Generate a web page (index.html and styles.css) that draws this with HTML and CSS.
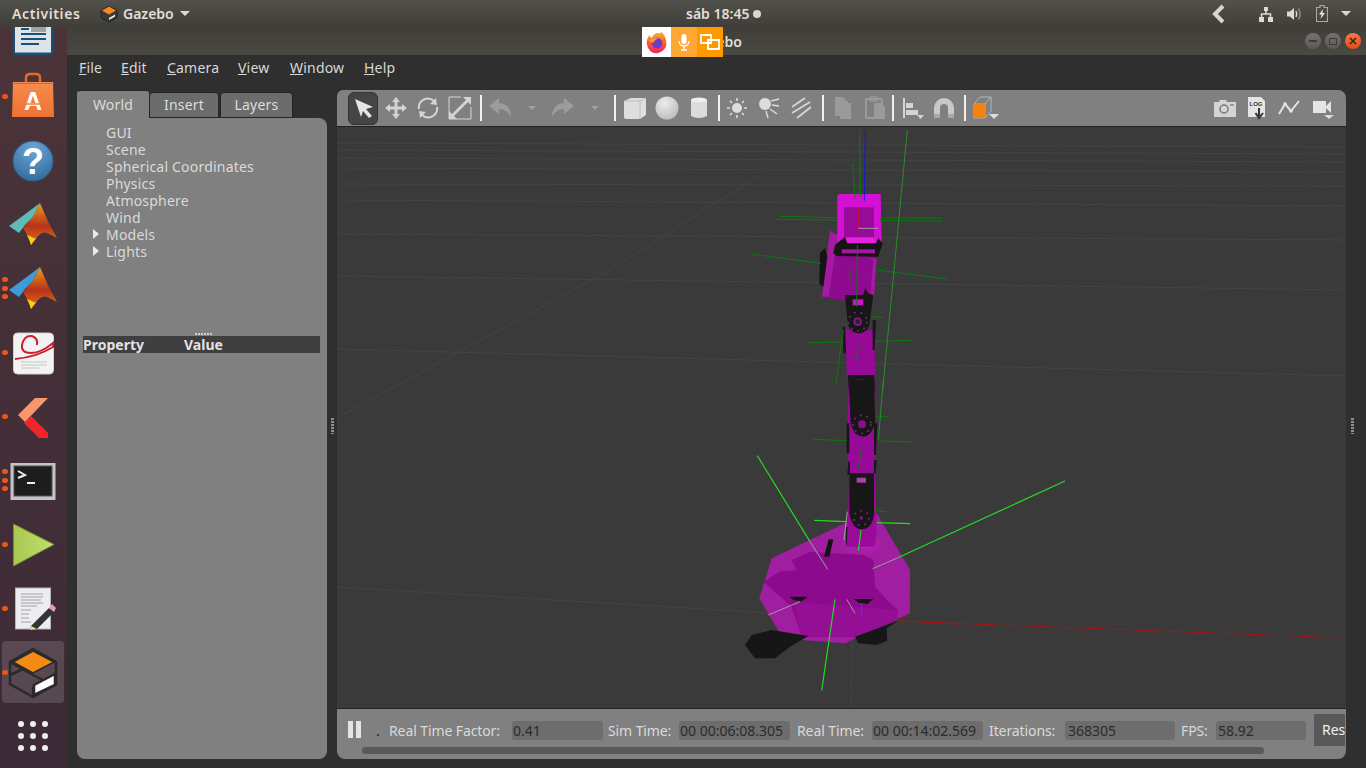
FILE: index.html
```html
<!DOCTYPE html>
<html lang="es">
<head>
<meta charset="utf-8">
<title>Gazebo</title>
<link rel="stylesheet" href="styles.css">
</head>
<body>
<header class="topbar">
  <span class="tb-activities">Activities</span>
  <span class="tb-app">
    <svg class="tb-appicon" viewBox="0 0 18 18" width="18" height="18"><path d="M9 1 17 5.500V12.500L9 17 1 12.500V5.500Z" fill="#3a3a3a" stroke="#222" stroke-width="1"/><path d="M9 1.500 16 5.500 9 9.500 2 5.500Z" fill="#f58a1f"/><path d="M9 13 15 9.500V11.500L9 15Z" fill="#eee"/></svg>
    Gazebo<i class="caret"></i>
  </span>
  <span class="tb-clock">sáb 18:45<i class="clock-dot"></i></span>
  <span class="tb-status">
    <svg viewBox="0 0 16 24" width="16" height="24"><path d="M13 4 5 12 13 20" fill="none" stroke="#d8d6d0" stroke-width="4"/></svg>
    <svg class="st-net" viewBox="0 0 16 16" width="16" height="16"><path d="M6 1h4v4H6zM1 11h5v5H1zM10 11h5v5h-5z" fill="#dcdad4"/><path d="M8 5v3M3.500 11V8h9v3" fill="none" stroke="#dcdad4" stroke-width="1.500"/></svg>
    <svg class="st-vol" viewBox="0 0 16 16" width="16" height="16"><path d="M1 5.500h3L8 2v12L4 10.500H1z" fill="#dcdad4"/><path d="M10 5q1.500 3 0 6" fill="none" stroke="#dcdad4" stroke-width="1.500"/><path d="M12.500 2.500q3 5.500 0 11" fill="none" stroke="#8f8d88" stroke-width="1.500"/></svg>
    <svg class="st-bat" viewBox="0 0 12 17" width="12" height="17"><path d="M4 .5h4v2h3.500v14H.5v-14H4z" fill="none" stroke="#a9a7a1" stroke-width="1.200"/><path d="M7 4 3 9.500h2.500L4.500 14 9 8H6.500z" fill="#e4e2dc"/></svg>
    <i class="caret st-caret"></i>
  </span>
</header>

<div class="desk">
  <nav class="dock">
    <div class="dock-list">
      <div class="dock-item">
        <svg viewBox="0 0 64 64" width="64" height="64"><g transform="translate(0 7)"><rect x="12" y="7" width="40" height="40" rx="3" fill="#14507a"/><rect x="14" y="9" width="36" height="35.500" fill="#dfe3e6"/><rect x="30" y="14" width="15" height="10" fill="#9aa3a8"/><path d="M20 17h8M20 21h8M20 26h25M20 31h25M20 36h18" stroke="#16527d" stroke-width="2"/></g></svg>
      </div>
      <div class="dock-item">
        <i class="pip pip-mid"></i>
        <svg viewBox="0 0 64 64" width="64" height="64"><defs><linearGradient id="bag" x1="0" y1="0" x2="0" y2="1"><stop offset="0" stop-color="#f68c50"/><stop offset="1" stop-color="#ee7230"/></linearGradient></defs><path d="M25 18v-5q0-4 4-4h6q4 0 4 4v5" fill="none" stroke="#e56a2a" stroke-width="2.500"/><path d="M12 17h40l1 35H11z" fill="url(#bag)"/><path d="M11 18h42v1H11z" fill="#d4622a"/><text x="32" y="45" class="dock-a">A</text><path d="M25 39h14" stroke="#f07a38" stroke-width="1.500"/></svg>
      </div>
      <div class="dock-item">
        <svg viewBox="0 0 64 64" width="64" height="64"><defs><radialGradient id="help" cx=".5" cy=".2" r=".9"><stop offset="0" stop-color="#6ea6d4"/><stop offset="1" stop-color="#2b6699"/></radialGradient></defs><circle cx="32" cy="32" r="20" fill="url(#help)" stroke="#2a5f8e"/><text x="32" y="45" class="dock-q">?</text></svg>
      </div>
      <div class="dock-item">
        <svg viewBox="0 0 64 64" width="64" height="64"><defs><linearGradient id="mat" x1="0" y1="0" x2="0" y2="1"><stop offset="0" stop-color="#f29a1c"/><stop offset=".55" stop-color="#b5331a"/><stop offset="1" stop-color="#e8751a"/></linearGradient></defs><path d="M8 33 23 22 39 10 32 24 24 32 18 40Z" fill="#5fbcb4"/><path d="M39 10Q46 28 56 45L46 40Q42 38 37 43 32 50 30 52 28 44 22 35 32 26 39 10Z" fill="url(#mat)"/><path d="M26 42Q29 48 30 52 33 47 35 46Z" fill="#f2d21c"/></svg>
      </div>
      <div class="dock-item">
        <i class="pip pip-a"></i><i class="pip pip-b"></i><i class="pip pip-c"></i>
        <svg viewBox="0 0 64 64" width="64" height="64"><path d="M8 33 23 22 39 10 32 24 24 32 18 40Z" fill="#3f9bd8"/><path d="M39 10Q46 28 56 45L46 40Q42 38 37 43 32 50 30 52 28 44 22 35 32 26 39 10Z" fill="url(#mat)"/><path d="M26 42Q29 48 30 52 33 47 35 46Z" fill="#f2d21c"/></svg>
      </div>
      <div class="dock-item">
        <i class="pip pip-mid"></i>
        <svg viewBox="0 0 64 64" width="64" height="64"><rect x="12.500" y="12" width="40" height="41" rx="4" fill="#f3f3f3" stroke="#cfcfcf"/><path d="M14 38Q36 36 52 26V22Q40 32 30 32 20 32 21 24 23 14 31 15 37 17 36 24" fill="none" stroke="#cc2030" stroke-width="2"/><path d="M20 41h26M20 44h26M20 47h18" stroke="#c4c4c4"/></svg>
      </div>
      <div class="dock-item">
        <i class="pip pip-mid"></i>
        <svg viewBox="0 0 64 64" width="64" height="64"><path d="M47 13H34L17 30 24 37Z" fill="#f9976c"/><path d="M23 38 30 31 47 48V53H38Z" fill="#f3242b"/></svg>
      </div>
      <div class="dock-item">
        <i class="pip pip-a"></i><i class="pip pip-b"></i><i class="pip pip-c"></i>
        <svg viewBox="0 0 64 64" width="64" height="64"><rect x="9.500" y="14" width="45" height="37" fill="#c4c4c4"/><rect x="13" y="17" width="38" height="30" fill="#1d1d1d" stroke="#555"/><path d="M17 22 24 26 17 29" fill="none" stroke="#eee" stroke-width="2"/><path d="M26 34h8" stroke="#eee" stroke-width="2"/></svg>
      </div>
      <div class="dock-item">
        <i class="pip pip-mid"></i>
        <svg viewBox="0 0 64 64" width="64" height="64"><defs><linearGradient id="play" x1="0" y1="0" x2="1" y2="0"><stop offset="0" stop-color="#a8c94e"/><stop offset="1" stop-color="#c4dd72"/></linearGradient></defs><path d="M12.500 11 53 31.500 12.500 53Z" fill="url(#play)" stroke="#6f962a"/></svg>
      </div>
      <div class="dock-item">
        <i class="pip pip-mid"></i>
        <svg viewBox="0 0 64 64" width="64" height="64"><rect x="14.500" y="11" width="35" height="41" fill="#ecedf0" stroke="#b4b4b8"/><path d="M20 17h22M20 20h22M20 23h20M20 26h22M20 29h16M20 33h10M20 37h8M20 41h8M20 45h10" stroke="#a2a2a6"/><path d="M30 49 48 31 53 35 36 52 29 53Z" fill="#333"/><path d="M48 31 51 27 55 31 53 35Z" fill="#e69ac0"/><path d="M30 49 36 52 29 53Z" fill="#f0e080"/></svg>
      </div>
      <div class="dock-item dock-active">
        <i class="pip pip-mid"></i>
        <svg viewBox="0 0 64 64" width="64" height="64"><path d="M32 8 55 21V43L32 56 9 43V21Z" fill="none" stroke="#2a2a2a" stroke-width="2.500"/><path d="M32 10 53 21 32 32 12 21Z" fill="#f58a14" stroke="#2a2a2a" stroke-width="1.500"/><path d="M9 21 32 34 42 39M9 34 22 28M32 56V47L42 39" fill="none" stroke="#2a2a2a" stroke-width="2.500"/><path d="M33 44 54 33V44L33 54Z" fill="#fff" stroke="#2a2a2a" stroke-width="2.500"/></svg>
      </div>
      <div class="dock-item">
        <svg viewBox="0 0 64 64" width="64" height="64" fill="#efefef"><circle cx="20" cy="19" r="3"/><circle cx="32" cy="19" r="3"/><circle cx="44" cy="19" r="3"/><circle cx="20" cy="31" r="3"/><circle cx="32" cy="31" r="3"/><circle cx="44" cy="31" r="3"/><circle cx="20" cy="43" r="3"/><circle cx="32" cy="43" r="3"/><circle cx="44" cy="43" r="3"/></svg>
      </div>
    </div>
  </nav>

  <div class="window">
    <div class="titlebar">
      <span class="win-title">Gazebo</span>
      <span class="win-btns">
        <i class="win-btn"><b class="ico-min"></b></i>
        <i class="win-btn"><b class="ico-max"></b></i>
        <i class="win-btn win-close"><svg viewBox="0 0 10 10" width="10" height="10"><path d="M2 2 8 8M8 2 2 8" stroke="#3a2015" stroke-width="1.500"/></svg></i>
      </span>
      <div class="sharebar">
        <span class="share-fx">
          <svg viewBox="0 0 24 24" width="23" height="23"><defs><linearGradient id="fx" x1="0" y1="0" x2="0" y2="1"><stop offset="0" stop-color="#ffb322"/><stop offset=".5" stop-color="#ff5a36"/><stop offset="1" stop-color="#e7255f"/></linearGradient></defs><path d="M12 2Q16 3 17 1 21 4 22 10 24 20 14 23 4 24 2 14 1 9 5 4 5 7 7 7 9 3 12 2Z" fill="url(#fx)"/><circle cx="12.500" cy="12.500" r="5.500" fill="#6a3cc8"/><path d="M4 10Q9 6 14 8 10 9 9 12 6 13 4 10Z" fill="#ff9a20"/></svg>
        </span>
        <span class="share-mic">
          <svg viewBox="0 0 16 20" width="16" height="20"><rect x="5.500" y="2" width="5" height="10" rx="2.500" fill="#fff"/><path d="M3 9q0 5 5 5t5-5M8 14v4M5 18h6" fill="none" stroke="#fff" stroke-width="1.300"/></svg>
        </span>
        <span class="share-win">
          <svg viewBox="0 0 20 16" width="20" height="16"><path d="M1 1h10v8H1zM8 6h11v9H8z" fill="#ff9900" stroke="#fff" stroke-width="1.800"/></svg>
        </span>
      </div>
    </div>

    <div class="menubar">
      <span class="menu m-file"><u>F</u>ile</span>
      <span class="menu m-edit"><u>E</u>dit</span>
      <span class="menu m-cam"><u>C</u>amera</span>
      <span class="menu m-view"><u>V</u>iew</span>
      <span class="menu m-win"><u>W</u>indow</span>
      <span class="menu"><u>H</u>elp</span>
    </div>

    <div class="main">
      <aside class="leftcol">
        <div class="tabs">
          <span class="tab tab-on">World</span>
          <span class="tab tab-ins">Insert</span>
          <span class="tab tab-lay">Layers</span>
        </div>
        <div class="panel">
          <ul class="tree">
            <li>GUI</li>
            <li>Scene</li>
            <li>Spherical Coordinates</li>
            <li>Physics</li>
            <li>Atmosphere</li>
            <li>Wind</li>
            <li class="has-kids">Models</li>
            <li class="has-kids">Lights</li>
          </ul>
          <div class="vgrip"></div>
          <div class="prop-head"><span class="prop-a">Property</span><span>Value</span></div>
        </div>
      </aside>

      <div class="split"><i class="grip"></i></div>

      <section class="view">
        <div class="toolbar">
          <span class="tool tool-on"><svg viewBox="0 0 24 24" width="24" height="24"><path d="M4 3 22 11 15 13 21 20 18 22 12 15 10 21Z" fill="#e4e4e4"/></svg></span>
          <span class="tool"><svg viewBox="0 0 24 24" width="24" height="24"><path d="M12 1 16 6H13.500V10.500H18V8L23 12 18 16V13.500H13.500V18H16L12 23 8 18H10.500V13.500H6V16L1 12 6 8V10.500H10.500V6H8Z" fill="#d4d4d4"/></svg></span>
          <span class="tool"><svg viewBox="0 0 24 24" width="24" height="24"><path d="M3 13A9 9 0 0 1 18 5M21 11A9 9 0 0 1 6 19" fill="none" stroke="#d4d4d4" stroke-width="2"/><path d="M14 8 21 9 20 2ZM10 16 3 15 4 22Z" fill="#d4d4d4"/></svg></span>
          <span class="tool"><svg viewBox="0 0 24 24" width="24" height="24"><path d="M13 1H1V23H23V11" fill="none" stroke="#d4d4d4" stroke-width="1"/><path d="M15 1H23V9L20 6 6 20 9 23H1V15L4 18 18 4Z" fill="#d4d4d4"/></svg></span>
          <i class="sep"></i>
          <span class="tool"><svg viewBox="0 0 24 24" width="24" height="24"><path d="M1 10 11 2V7Q23 8 23 21 19 13 11 13V18Z" fill="#9c9c9c"/></svg></span>
          <span class="tool tool-drop"><i class="drop drop-dim"></i></span>
          <span class="tool"><svg viewBox="0 0 24 24" width="24" height="24"><path d="M23 10 13 2V7Q1 8 1 21 5 13 13 13V18Z" fill="#9c9c9c"/></svg></span>
          <span class="tool tool-drop"><i class="drop drop-dim"></i></span>
          <i class="sep sep-a"></i>
          <span class="tool"><svg viewBox="0 0 24 24" width="24" height="24"><path d="M1 5 8 2 23 2V19L17 23H3Q1 23 1 21Z" fill="#dedede"/><path d="M1 5 17 5 23 2M17 5V23" fill="none" stroke="#bdbdbd"/></svg></span>
          <span class="tool"><svg viewBox="0 0 24 24" width="24" height="24"><defs><radialGradient id="ball" cx=".4" cy=".3" r=".8"><stop offset="0" stop-color="#ececec"/><stop offset="1" stop-color="#b8b8b8"/></radialGradient></defs><circle cx="12" cy="12" r="11.500" fill="url(#ball)"/></svg></span>
          <span class="tool"><svg viewBox="0 0 24 24" width="24" height="24"><path d="M4 4Q12 0 20 4V20Q12 24 4 20Z" fill="#dcdcdc"/><ellipse cx="12" cy="4" rx="8" ry="2.500" fill="#eee"/></svg></span>
          <i class="sep sep-b"></i>
          <span class="tool"><svg viewBox="0 0 24 24" width="24" height="24"><circle cx="12" cy="12" r="5" fill="#dcdcdc"/><path d="M12 2V5M12 19V22M2 12H5M19 12H22M5 5 7 7M19 5 17 7M5 19 7 17M19 19 17 17" stroke="#dcdcdc" stroke-width="1.600"/></svg></span>
          <span class="tool"><svg viewBox="0 0 24 24" width="24" height="24"><circle cx="8" cy="8" r="6" fill="#dcdcdc"/><path d="M14 5 22 3M15 9 22 10M13 13 20 18M9 15 11 22" stroke="#dcdcdc" stroke-width="1.400"/></svg></span>
          <span class="tool"><svg viewBox="0 0 24 24" width="24" height="24"><path d="M3 11 16 2M3 17 21 6M8 22 22 11" stroke="#d4d4d4" stroke-width="2"/></svg></span>
          <i class="sep sep-c"></i>
          <span class="tool"><svg viewBox="0 0 24 24" width="24" height="24"><path d="M4 1H12L17 6V20H4ZM14 7 20 7V23H9V21" fill="#9a9a9a"/></svg></span>
          <span class="tool"><svg viewBox="0 0 24 24" width="24" height="24"><path d="M3 3H19V22H3Z" fill="none" stroke="#a2a2a2" stroke-width="1.500"/><rect x="7" y="1" width="8" height="4" rx="1" fill="none" stroke="#a2a2a2"/><path d="M11 7H18L22 11V23H11Z" fill="#9a9a9a"/></svg></span>
          <i class="sep sep-d"></i>
          <span class="tool"><svg viewBox="0 0 24 24" width="24" height="24"><path d="M4 2V22" stroke="#d4d4d4" stroke-width="2"/><path d="M6 7H13V12H6ZM6 14H18V19H6Z" fill="#d4d4d4"/><path d="M17 19H24L20.500 23Z" fill="#d4d4d4"/></svg></span>
          <span class="tool"><svg viewBox="0 0 24 24" width="24" height="24"><path d="M2 22V12A10 10 0 0 1 22 12V22H16V12A4 4 0 0 0 8 12V22Z" fill="#c8c8c8"/><path d="M2 22H8V18H2ZM16 22H22V18H16Z" fill="#a8a8a8"/></svg></span>
          <i class="sep sep-e"></i>
          <span class="tool tool-view"><svg viewBox="0 0 26 24" width="26" height="24"><path d="M1 8H12V22H1ZM1 8 7 1H18L12 8M18 1V15L12 22" fill="none" stroke="#b4b4b4"/><rect x="1" y="8" width="11" height="14" fill="#f5820f"/><path d="M16 18H26L21 23Z" fill="#dcdcdc"/></svg></span>
          <span class="tool-space"></span>
          <span class="tool"><svg viewBox="0 0 24 24" width="24" height="24"><path d="M1 6H6L7 4H13L14 6H23V21H1Z" fill="#d4d4d4"/><circle cx="11" cy="13" r="4" fill="none" stroke="#777" stroke-width="1.500"/><rect x="17" y="8" width="4" height="2" fill="#999"/></svg></span>
          <span class="tool"><svg viewBox="0 0 24 24" width="24" height="24"><path d="M3 1H16L20 5V21H3Z" fill="#e4e4e4"/><text x="11" y="10" class="log-txt">LOG</text><path d="M14 12V20M10.500 17 14 22 18 17" fill="none" stroke="#333" stroke-width="2"/></svg></span>
          <span class="tool"><svg viewBox="0 0 24 24" width="24" height="24"><path d="M2 18 8 8 14 15 22 5" fill="none" stroke="#e4e4e4" stroke-width="2"/><circle cx="8" cy="8" r="1.800" fill="#e4e4e4"/><circle cx="14" cy="15" r="1.800" fill="#e4e4e4"/></svg></span>
          <span class="tool tool-last"><svg viewBox="0 0 24 24" width="24" height="24"><path d="M2 5H15V17H2ZM15 10 20 5V17L15 12Z" fill="#e4e4e4"/><path d="M13 19H23L18 23Z" fill="#dcdcdc"/></svg></span>
        </div>

        <div class="scene">
          <svg class="scene-svg" viewBox="337 127 1009 581" width="1009" height="581">
            <g class="grid">
              <path d="M337 143 1346 147M337 150 1346 154M337 158 1346 162M337 168 1346 172M337 184 1346 186M337 200 1346 206M337 234 1346 240M337 276 1346 290M337 349 1346 376M337 587 920 622"/>
              <path d="M337 418 610 270 760 175M860 127 851 708"/>
            </g>
            <path class="axis-red" d="M920 622 1346 638"/>

            <g transform="translate(730 130) scale(.33333)">
              <path d="M300 302 440 385 432 500 345 512 276 500Z" fill="#8e0a8e"/>
              <path d="M300 302 340 325 420 385 440 385 432 500 420 500 430 390 320 340 296 500 276 500Z" fill="#a31ba3"/>
              <path d="M322 195 330 192H452L455 340 440 345H330L322 330Z" fill="#d410d4"/>
              <rect x="342" y="232" width="90" height="98" fill="#980a98"/>
              <path d="M345 322H430L440 345 345 345Z" fill="#e820e0"/>
              <path d="M315 345 345 320 352 340H438L445 325 458 340 445 380 320 378 310 370Z" fill="#141414"/>
              <rect x="335" y="358" width="100" height="12" fill="#a418a4"/>
              <path d="M270 370 285 355 292 380 280 470 268 462Z" fill="#141414"/>
              <path d="M347 600H432L436 735H350Z" fill="#960a96"/>
              <path d="M345 495 400 495 405 475 415 490 430 495 418 585Q410 612 382 610 355 605 352 570Z" fill="#171717"/>
              <rect x="368" y="508" width="32" height="18" fill="#d010c8"/>
              <circle cx="383" cy="575" r="13" fill="#8e108e"/>
              <circle cx="383" cy="575" r="7" fill="#242424"/>
              <circle class="holes" cx="383" cy="575" r="28"/>
              <path d="M338 590 345 590 348 670 340 670ZM428 570 438 570 434 660 428 660Z" fill="#171717"/>
              <path d="M354 735H432L436 780H354Z" fill="#171717"/>
              <rect x="376" y="749" width="30" height="14" fill="#a318a3"/>
              <g class="g-dark">
                <path d="M388 14 392 200M368 100 375 205M148 259 322 263M136 268 322 270M636 264 450 264M638 273 448 272M70 373 272 400M440 420 650 447M382 345 380 530M360 420V455M425 560 460 562M236 638 340 636M435 634 546 631M340 600 318 758M386 650 376 695"/>
              </g>
              <path class="g-mid" d="M532 0 458 780"/>
              <path class="a-blue" d="M406 0 403 212"/>
              <path class="a-red" d="M385 234V298"/>
              <path class="a-grey" d="M385 295H445"/>
            </g>

            <g transform="translate(730 380) scale(.33333)">
              <path d="M125 535 345 430 440 400 540 570 540 700 345 790 215 780 150 760 88 655Z" fill="#a01ea0"/>
              <path d="M185 540 240 515 400 525 430 540 435 620 480 670 503 690 500 720 380 770 215 770 185 680 100 605 150 575 200 570Z" fill="#8c0a8c"/>
              <path d="M190 665 500 690 500 720 380 770 215 770Z" fill="#930f93"/>
              <path d="M45 795 65 765 125 750 235 768 180 800 135 835 75 835Z" fill="#161616"/>
              <path d="M375 770 505 722 470 745 472 782 440 795 385 790Z" fill="#161616"/>
              <path d="M178 650H234L215 664 190 660ZM372 657H430L412 672 385 668Z" fill="#141414"/>
              <path d="M296 478H310L298 530H282Z" fill="#141414"/>
              <ellipse cx="395" cy="492" rx="58" ry="30" fill="#a520a5"/>
              <path d="M390 480Q420 460 435 475V505H392Z" fill="#d80cd0"/>
              <path d="M348 440H362V495H348ZM365 480H382V495H365Z" fill="#171717"/>
              <path d="M356 0H432L440 170 436 280H356L352 170Z" fill="#970a97"/>
              <path d="M356 0H432L436 125Q425 170 398 170 370 168 362 130Z" fill="#171717"/>
              <path d="M350 130 358 130 358 220 350 220ZM355 245H360V285H352ZM432 130 442 130 438 225 432 225ZM432 240H440L436 285H432Z" fill="#171717"/>
              <circle cx="396" cy="133" r="12" fill="#8a108a"/>
              <circle class="holes" cx="396" cy="133" r="27"/>
              <path d="M358 280H435L440 450 434 500H350Z" fill="#980a98"/>
              <path d="M358 280H432L432 405Q425 448 394 448 366 445 358 400Z" fill="#171717"/>
              <rect x="380" y="293" width="28" height="15" fill="#a840a8"/>
              <circle cx="394" cy="414" r="5" fill="#8a108a"/>
              <circle class="holes" cx="394" cy="414" r="22"/>
              <path class="g-dark" d="M250 178 350 182M445 183 548 186M438 108 474 111M395 200 385 265M432 390 470 396"/>
              <path class="g-mid" d="M460 0 445 180"/>
              <path class="g-bright" d="M82 227 240 485M1005 303 500 535M315 658 275 932M253 421 350 425M440 428 540 431M393 450 385 512"/>
              <path class="a-grey" d="M240 485 293 568M500 535 428 566M350 658 375 700M115 705 210 665M352 395 342 480"/>
              <path class="a-purple" d="M395 670V710"/>
              <path class="a-redb" d="M505 722 690 732"/>
            </g>
          </svg>
        </div>

        <div class="status">
          <span class="pause"><i></i><i></i></span>
          <span class="st-dot">.</span>
          <span class="lbl l-rtf">Real Time Factor:</span><span class="fld f-rtf">0.41</span>
          <span class="lbl l-sim">Sim Time:</span><span class="fld f-time">00 00:06:08.305</span>
          <span class="lbl l-real">Real Time:</span><span class="fld f-time">00 00:14:02.569</span>
          <span class="lbl l-iter">Iterations:</span><span class="fld f-iter">368305</span>
          <span class="lbl l-fps">FPS:</span><span class="fld f-fps">58.92</span>
          <span class="reset">Res</span>
          <i class="hscroll"></i>
        </div>
      </section>

      <div class="rhandle"><i class="grip"></i></div>
    </div>
  </div>
</div>
</body>
</html>
```
FILE: styles.css
```css
* { box-sizing: border-box; }
html, body { margin: 0; padding: 0; }
body {
  width: 1366px; height: 768px; overflow: hidden;
  display: flex; flex-direction: column;
  font-family: "Noto Sans", "Open Sans", sans-serif;
  font-size: 14px; background: #2f2f2f;
}
i, b { display: block; font-style: normal; }

/* top bar */
.topbar {
  height: 27px; flex: none; position: relative; z-index: 3;
  display: flex; align-items: center;
  background: linear-gradient(#53514b, #3f3e39);
  color: #e2dfd8; font-weight: 600; font-size: 14px;
}
.tb-activities { margin-left: 12px; width: 88px; letter-spacing: .6px; }
.tb-app { display: flex; align-items: center; }
.tb-appicon { margin-right: 5px; }
.caret { width: 0; height: 0; border: 5px solid transparent; border-top: 5px solid #dcdad4; border-bottom: 0; margin-left: 6px; }
.tb-clock { position: absolute; left: 686px; display: flex; align-items: center; }
.clock-dot { width: 8px; height: 8px; border-radius: 50%; background: #d8d6d0; margin-left: 4px; }
.tb-status { margin-left: auto; display: flex; align-items: center; }
.tb-status > svg:first-child { margin-right: 32px; }
.st-net { margin-right: 12px; }
.st-vol { margin-right: 14px; }
.st-bat { margin-right: 13px; }
.st-caret { margin: 0 15px 0 0; }

/* desk */
.desk { flex: 1; display: flex; min-height: 0; }

/* dock */
.dock {
  width: 67px; flex: none; overflow: hidden;
  background: linear-gradient(#4b3439, #3c2a36);
}
.dock-list { margin-top: -26px; display: flex; flex-direction: column; }
.dock-item { height: 64px; flex: none; position: relative; padding-left: 1px; }
.dock-item svg { display: block; }
.dock-active::before {
  content: ""; position: absolute; left: 2px; top: 0; width: 62px; height: 62px;
  background: rgba(255,255,255,.14); border-radius: 4px;
}
.dock-active svg { position: relative; }
.pip { position: absolute; left: 2px; width: 5.500px; height: 5.500px; border-radius: 50%; background: #e9541f; }
.pip-mid { top: 28.500px; }
.pip-a { top: 19.500px; }
.pip-b { top: 28.500px; }
.pip-c { top: 36.500px; }
.dock-a { font-size: 25px; font-weight: 700; fill: #fff; text-anchor: middle; font-family: "Liberation Sans", sans-serif; }
.dock-q { font-size: 36px; font-weight: 700; fill: #fff; text-anchor: middle; font-family: "Liberation Sans", sans-serif; }

/* window */
.window { flex: 1; display: flex; flex-direction: column; min-width: 0; position: relative; }
.titlebar {
  height: 28px; flex: none; position: relative;
  display: flex; align-items: center; justify-content: center;
  background: linear-gradient(#3f3e39, #4a4943);
}
.win-title { color: #e2dfd8; font-weight: 600; margin-top: 0; }
.win-btns { position: absolute; right: 5px; top: 6px; display: flex; gap: 4px; }
.win-btn {
  width: 16px; height: 16px; border-radius: 50%;
  background: linear-gradient(#75736e, #5a5955);
  display: flex; align-items: center; justify-content: center;
}
.ico-min { width: 8px; height: 1.500px; background: #3d3c38; }
.ico-max { width: 8px; height: 7px; border: 1.500px solid #3d3c38; }
.win-close { background: linear-gradient(#f47a45, #df4d18); }
.sharebar { position: absolute; left: 575px; top: 0; height: 30px; display: flex; }
.sharebar span { display: flex; align-items: center; justify-content: center; }
.share-fx { width: 29px; background: #fff; }
.share-mic { width: 26px; background: #ffa733; }
.share-win { width: 26px; background: #ff9900; }

.menubar {
  height: 27px; flex: none; display: flex; align-items: center;
  padding: 0 0 2px 12px; background: #2f2f2f; color: #d8d8d8;
  letter-spacing: .2px; font-size: 14px;
}
.menu { flex: none; }
.m-file { width: 42px; }
.m-edit { width: 46px; }
.m-cam { width: 71px; }
.m-view { width: 52px; }
.m-win { width: 74px; }

/* main */
.main { flex: 1; display: flex; min-height: 0; padding: 8px 0 9px 10px; }
.leftcol { width: 250px; flex: none; display: flex; flex-direction: column; }
.tabs { height: 28px; flex: none; display: flex; align-items: flex-end; gap: 1px; color: #dcdcdc; letter-spacing: .2px; }
.tab {
  height: 26px; background: #6c6c6c; border: 1px solid #232323;
  border-radius: 4px 4px 0 0; display: flex; align-items: center; justify-content: center;
  padding-bottom: 1px;
}
.tab-on { width: 72px; height: 29px; margin-bottom: -1px; background: #808080; border-color: #808080; position: relative; z-index: 1; border-top-color: #2a2a2a; padding-bottom: 0; }
.tab-ins { width: 70px; margin-left: -1px; }
.tab-lay { width: 73px; }
.panel { flex: 1; background: #808080; border-radius: 0 8px 8px 8px; position: relative; padding-top: 6px; color: #dadada; min-height: 0; }
.tree { list-style: none; margin: 0; padding: 0 0 0 29px; line-height: 17px; height: 202px; letter-spacing: .2px; }
.tree li { position: relative; height: 17px; white-space: nowrap; }
.has-kids::before {
  content: ""; position: absolute; left: -13px; top: 3px; width: 0; height: 0;
  border: 5px solid transparent; border-left: 6px solid #eaeaea; border-right: 0;
}
.vgrip { height: 2px; width: 17px; margin: 7px 0 0 118px; background: repeating-linear-gradient(90deg, #cfcfcf 0 2px, transparent 2px 3px); }
.prop-head {
  margin: 1px 7px 0 6px; height: 17px; background: #3f3f3f; color: #e2e2e2; font-weight: 700;
  display: flex; align-items: center; line-height: 17px;
}
.prop-a { width: 101px; }

.split { width: 10px; flex: none; display: flex; align-items: center; justify-content: center; padding-top: 2px; }
.grip { width: 3px; height: 16px; background: repeating-linear-gradient(#909090 0 2px, transparent 2px 3px); }

.view { width: 1009px; flex: none; display: flex; flex-direction: column; }
.toolbar {
  height: 37px; flex: none; display: flex; align-items: center; padding: 0 5px 0 11px;
  background: #808080; border-radius: 6px 8px 0 0; border-bottom: 1px solid #222;
}
.tool { width: 32px; height: 32px; flex: none; display: flex; align-items: center; justify-content: center; }
.tool-on { height: 33px; width: 30px; margin-right: 2px; background: #454545; border-radius: 6px; border: 1px solid #333; }
.tool-drop { width: 31px; }
.tool-view { width: 32px; }
.tool-space { flex: 1; }
.tool-last { width: 36px; }
.sep { width: 2px; height: 26px; flex: none; background: #f0f0f0; margin: 0 2px 0 4px; }
.sep-a { margin: 0 3px 0 4px; }
.sep-b { margin: 0 1px 0 3px; }
.sep-c { margin: 0 3px 0 5px; }
.sep-d { margin: 0 2px 0 1px; }
.sep-e { margin: 0 4px 0 4px; }
.drop { width: 0; height: 0; border: 4px solid transparent; border-top: 4px solid #dcdcdc; border-bottom: 0; }
.drop-dim { border-top-color: #a0a0a0; }
.log-txt { font-size: 6px; font-weight: 700; fill: #333; text-anchor: middle; font-family: "Liberation Sans", sans-serif; }

.scene { height: 581px; flex: none; background: #3a3a3a; overflow: hidden; }
.scene-svg { display: block; }
.grid path { fill: none; stroke: #444; stroke-width: 1; }
.axis-red { fill: none; stroke: #a31616; stroke-width: 1; stroke-dasharray: 24 3; }
.g-dark path, path.g-dark { fill: none; stroke: #0a7a0a; stroke-width: 3; }
.g-mid { fill: none; stroke: #2a8f2a; stroke-width: 3; }
.g-bright { fill: none; stroke: #22dc22; stroke-width: 3.500; }
.a-blue { fill: none; stroke: #1414d8; stroke-width: 3; }
.a-red { fill: none; stroke: #d01030; stroke-width: 3; }
.a-redb { fill: none; stroke: #a51414; stroke-width: 3; }
.a-grey { fill: none; stroke: #a0a0a0; stroke-width: 3; }
.a-purple { fill: none; stroke: #7a28d8; stroke-width: 3; }
.holes { fill: none; stroke: #7d2a7d; stroke-width: 5; stroke-dasharray: 5 15; }

.status {
  height: 51px; flex: none; position: relative; display: flex; align-items: flex-start;
  padding: 12px 0 0 11px; background: #808080; border-radius: 0 0 8px 8px;
  border-top: 1px solid #222; color: #dadada; white-space: nowrap;
}
.pause { width: 28px; display: flex; gap: 3px; height: 17px; flex: none; }
.pause i { width: 5px; height: 17px; background: #e4e4e4; }
.st-dot { width: 13px; flex: none; line-height: 19px; color: #222; }
.lbl { flex: none; line-height: 19px; letter-spacing: -.1px; }
.fld { flex: none; height: 19px; line-height: 19px; background: #6d6d6d; border-radius: 3px; color: #2b2b2b; padding-left: 1px; }
.f-rtf { width: 91px; }
.f-time { width: 111px; }
.f-iter { width: 110px; padding-left: 3px; }
.f-fps { width: 90px; padding-left: 2px; }
.l-rtf { width: 123px; }
.l-sim { width: 71px; margin-left: 5px; }
.l-real { width: 75px; margin-left: 7px; }
.l-iter { width: 76px; margin-left: 6px; }
.l-fps { width: 35px; margin-left: 6px; }
.reset {
  position: absolute; left: 977px; top: 5px; width: 31px; height: 32px; overflow: hidden;
  background: #585858; color: #f0f0f0; line-height: 32px; padding-left: 8px;
}
.hscroll { position: absolute; left: 25px; top: 38px; width: 902px; height: 7px; border-radius: 4px; background: #5a5a5a; }

.rhandle { width: 20px; flex: none; display: flex; align-items: center; justify-content: center; padding: 2px 7px 0 0; }
```
